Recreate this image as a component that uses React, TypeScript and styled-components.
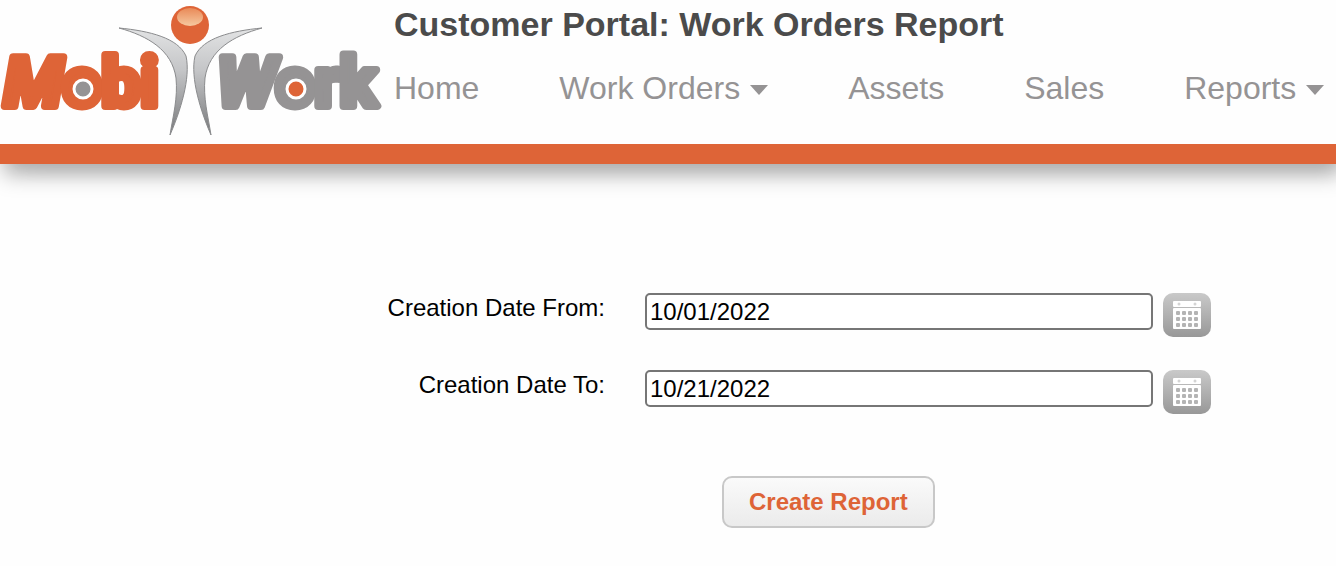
import React, { useState } from "react";
import styled, { createGlobalStyle } from "styled-components";

const orange = "#de6437";
const grey = "#959394";

const GlobalStyle = createGlobalStyle`
  *, *::before, *::after { box-sizing: border-box; }
  body {
    margin: 0;
    background: #fefefe;
    color: #000;
    font-family: "Liberation Sans", Arial, Helvetica, sans-serif;
    font-size: 24px;
  }
`;

const Header = styled.header`
  display: flex;
  min-height: 164px;
  border-bottom: 20px solid ${orange};
  box-shadow: 4px 10px 20px #aaa, 20px 10px 20px -10px #ddd;
`;

const LogoLink = styled.a`
  flex: none;
  width: 392px;
  height: 144px;
`;

const LogoSvg = styled.svg`
  display: block;
`;

const Wordmark = styled.text`
  font-family: Roboto, "Liberation Sans", sans-serif;
  font-weight: 700;
  font-size: 69px;
  stroke-width: 8px;
  stroke-linejoin: round;
`;

const HeaderBody = styled.div`
  flex: 1;
  min-width: 0;
  padding-left: 2px;
`;

const Title = styled.h1`
  margin: 4px 0 0;
  font-size: 34px;
  line-height: 40px;
  font-weight: 700;
  color: #4b4b4b;
  white-space: nowrap;
`;

const Nav = styled.nav`
  display: flex;
  gap: 80px;
  margin-top: 24px;
`;

const NavLink = styled.a`
  display: flex;
  align-items: center;
  gap: 10px;
  color: ${grey};
  font-size: 32px;
  line-height: 40px;
  text-decoration: none;
  white-space: nowrap;
`;

const Caret = styled.span`
  border: 9px solid transparent;
  border-top: 10px solid ${grey};
  border-bottom: 0;
  margin-top: 4px;
`;

const Form = styled.form`
  display: flex;
  flex-direction: column;
  gap: 33px;
  padding-top: 129px;
`;

const Row = styled.div`
  display: grid;
  grid-template-columns: 645fr 508fr 183fr;
  align-items: start;
`;

const Label = styled.label`
  padding-right: 40px;
  text-align: right;
  line-height: 30px;
`;

const DateInput = styled.input`
  width: 100%;
  height: 37px;
  padding: 0 3px;
  border: 2px solid #767676;
  border-radius: 5px;
  background: #fff;
  color: #000;
  font: inherit;
`;

const PickerButton = styled.button`
  width: 48px;
  height: 44px;
  margin-left: 10px;
  padding: 0;
  border: 0;
  border-radius: 10px;
  background: linear-gradient(#c9c9c9, #989898);
`;

const Actions = styled.div`
  display: flex;
  justify-content: center;
  margin-top: 29px;
  padding-left: 24%;
`;

const SubmitButton = styled.button`
  height: 52px;
  padding: 0 25px;
  border: 2px solid #c8c8c8;
  border-radius: 10px;
  background: linear-gradient(#fafafa, #ebebeb);
  color: ${orange};
  font: inherit;
  font-weight: 700;
`;

function Logo() {
  const limb =
    "M119 28 C150 31 178 38 186 56 C191 78 180 112 170 135 C173 116 178 98 176 78 C172 50 148 36 119 28Z";
  return (
    <LogoSvg width="392" height="144" viewBox="0 0 392 144" role="img" aria-label="MobiWork">
      <defs>
        <linearGradient id="limb" x1="0" y1="0" x2="0" y2="1">
          <stop offset="0" stopColor="#e2e3e4" />
          <stop offset="0.4" stopColor="#c4c5c7" />
          <stop offset="1" stopColor="#77787a" />
        </linearGradient>
        <linearGradient id="shine" x1="0" y1="0" x2="0" y2="1">
          <stop offset="0" stopColor="#e98a58" />
          <stop offset="1" stopColor="#f6c9a0" />
        </linearGradient>
      </defs>
      <Wordmark x="4" y="106" fill={orange} stroke={orange}>
        <tspan fontStyle="italic">M</tspan>obi
      </Wordmark>
      <Wordmark x="217" y="106" fill={grey} stroke={grey}>
        <tspan fontStyle="italic">W</tspan>ork
      </Wordmark>
      <circle cx="83" cy="89" r="9" fill={grey} stroke="#fff" strokeWidth="3" />
      <circle cx="296" cy="89" r="9" fill={orange} stroke="#fff" strokeWidth="3" />
      <path d={limb} fill="url(#limb)" stroke="#8a8b8d" />
      <path d={limb} fill="url(#limb)" stroke="#8a8b8d" transform="translate(381 0) scale(-1 1)" />
      <circle cx="190" cy="25" r="19" fill={orange} />
      <ellipse cx="190" cy="17" rx="13" ry="9" fill="url(#shine)" />
    </LogoSvg>
  );
}

function CalendarIcon() {
  return (
    <svg width="48" height="44" viewBox="0 0 48 44" aria-hidden="true">
      <rect x="10" y="8" width="28" height="6" rx="1" fill="#fff" />
      <rect x="10" y="15" width="28" height="21" rx="1" fill="#fff" />
      <circle cx="16" cy="11" r="1.5" fill="#d4d4d4" />
      <circle cx="32" cy="11" r="1.5" fill="#d4d4d4" />
      {[18, 24, 30].map((y) =>
        [13, 19, 25, 31].map((x) => (
          <rect key={`${x}-${y}`} x={x} y={y} width="4" height="4" rx="1" fill="#b4b4b4" />
        ))
      )}
    </svg>
  );
}

const links = [
  { text: "Home", menu: false },
  { text: "Work Orders", menu: true },
  { text: "Assets", menu: false },
  { text: "Sales", menu: false },
  { text: "Reports", menu: true },
];

function DateRow({ id, label, initial }: { id: string; label: string; initial: string }) {
  const [value, setValue] = useState(initial);
  return (
    <Row>
      <Label htmlFor={id}>{label}</Label>
      <DateInput id={id} type="text" value={value} onChange={(e) => setValue(e.target.value)} />
      <PickerButton type="button" aria-label={`Pick ${label}`}>
        <CalendarIcon />
      </PickerButton>
    </Row>
  );
}

export default function App() {
  return (
    <>
      <GlobalStyle />
      <Header>
        <LogoLink href="#">
          <Logo />
        </LogoLink>
        <HeaderBody>
          <Title>Customer Portal: Work Orders Report</Title>
          <Nav>
            {links.map((link) => (
              <NavLink key={link.text} href="#">
                {link.text}
                {link.menu && <Caret />}
              </NavLink>
            ))}
          </Nav>
        </HeaderBody>
      </Header>
      <main>
        <Form onSubmit={(e) => e.preventDefault()}>
          <DateRow id="from" label="Creation Date From:" initial="10/01/2022" />
          <DateRow id="to" label="Creation Date To:" initial="10/21/2022" />
          <Actions>
            <SubmitButton type="submit">Create Report</SubmitButton>
          </Actions>
        </Form>
      </main>
    </>
  );
}
